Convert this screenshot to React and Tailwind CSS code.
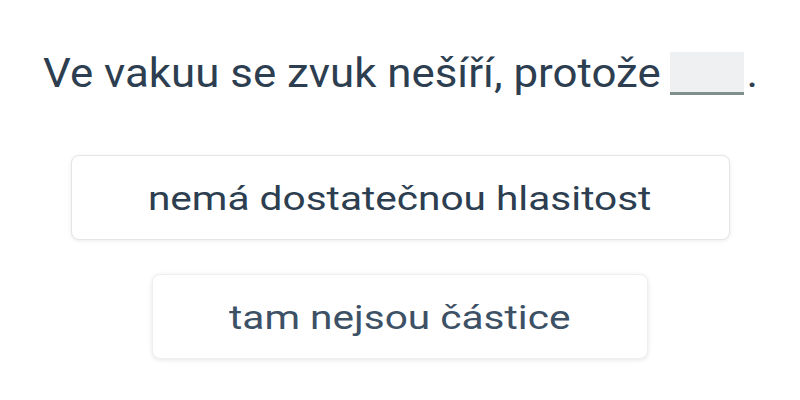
import React from "react";

const Option = ({ label, width, faded }) => (
  <button
    className={
      "h-[85px] rounded-lg bg-white border flex items-center justify-center text-[33px] " +
      width +
      (faded
        ? " border-[#eeeff1] text-[#3d5166] shadow-[0_1px_5px_rgba(0,0,0,0.10)]"
        : " border-[#e3e5e8] text-[#2c3e50] shadow-[0_1px_4px_rgba(0,0,0,0.08)]")
    }
  >
    <span className="whitespace-nowrap scale-x-[1.23] pt-[2px]">{label}</span>
  </button>
);

export default function App() {
  return (
    <div className="w-[800px] h-[400px] bg-white flex flex-col items-center pt-[52px] font-['Roboto',sans-serif]">
      <div className="flex items-end text-[40px] leading-[43px] text-[#2c3e50]">
        <span className="w-[617px] whitespace-nowrap origin-left scale-x-[1.096]">
          Ve vakuu se zvuk nešíří, protože
        </span>
        <span className="ml-[10px] w-[74px] h-[43px] bg-[#eef0f2] border-b-[3px] border-[#7f8f8c]"></span>
        <span className="ml-[3px] scale-x-[1.096]">.</span>
      </div>
      <div className="mt-[60px] flex flex-col items-center gap-[34px]">
        <Option label="nemá dostatečnou hlasitost" width="w-[659px]" />
        <Option label="tam nejsou částice" width="w-[496px]" faded />
      </div>
    </div>
  );
}
